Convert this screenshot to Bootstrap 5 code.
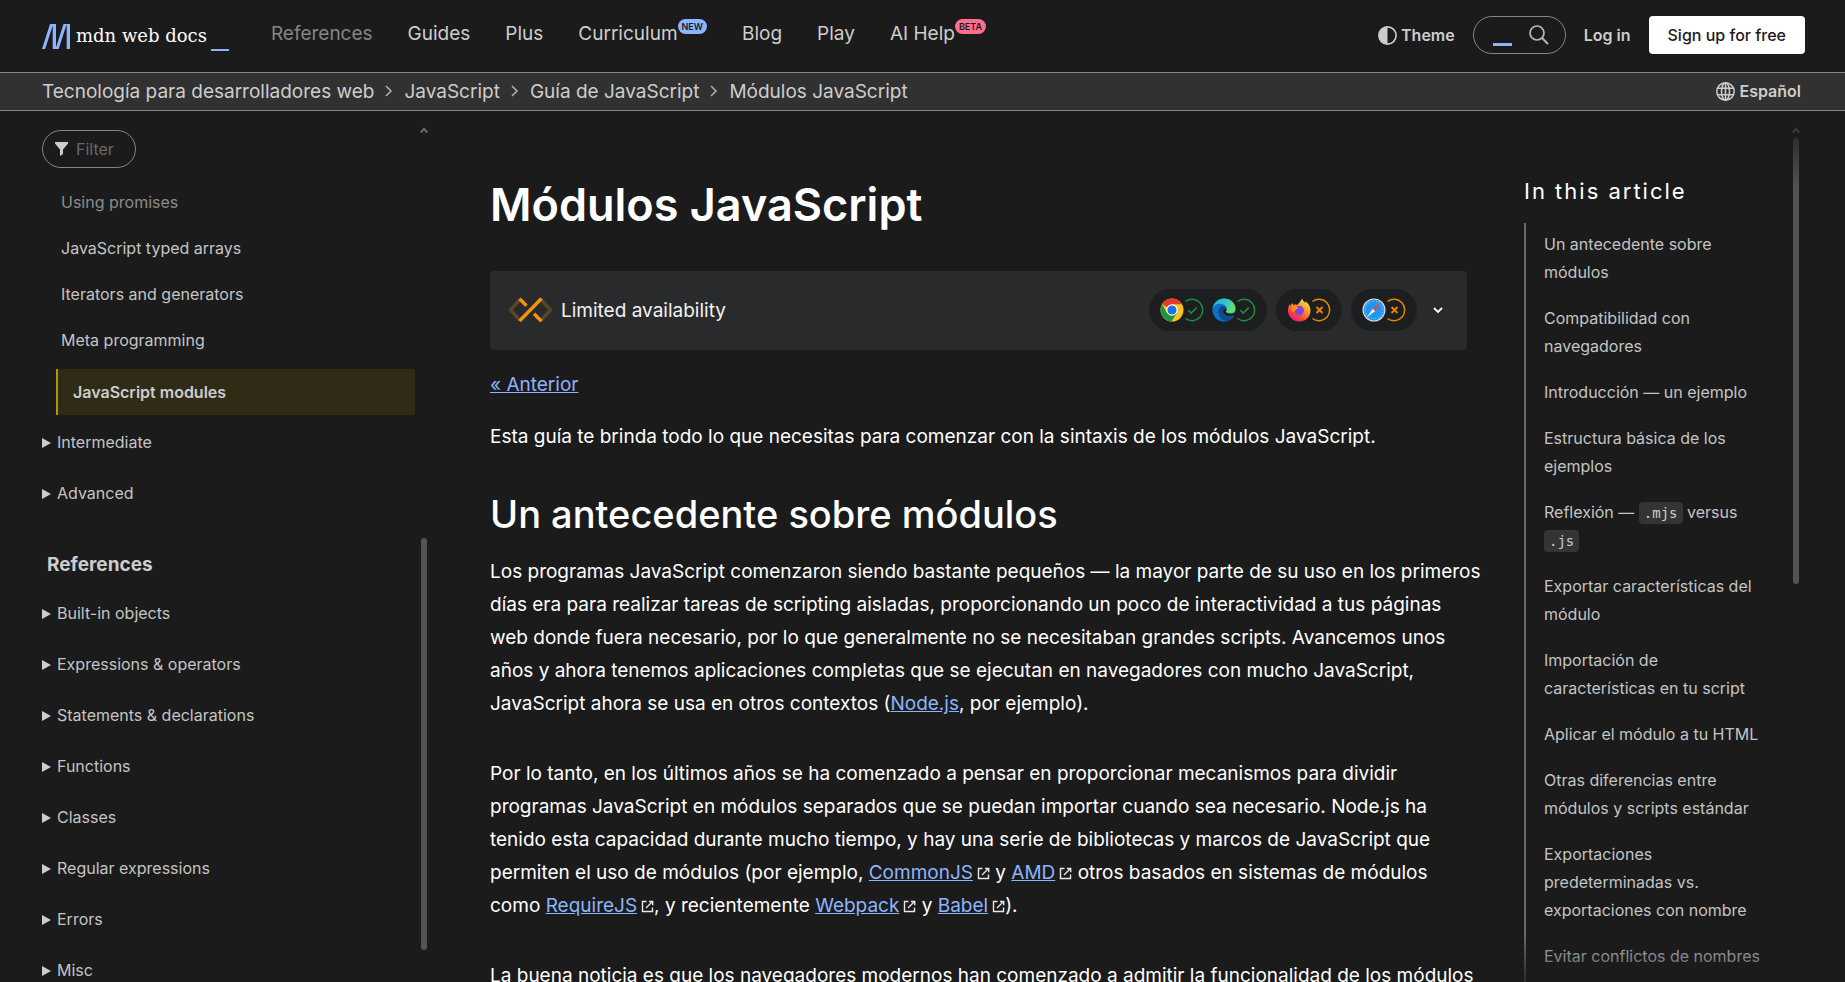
<!DOCTYPE html>
<html lang="es" data-bs-theme="dark">
<head>
<meta charset="utf-8">
<meta name="viewport" content="width=device-width, initial-scale=1">
<title>Módulos JavaScript | MDN</title>
<link href="https://cdn.jsdelivr.net/npm/bootstrap@5.3.0/dist/css/bootstrap.min.css" rel="stylesheet">
<style>
:root{--page:#1b1b1b;--bar:#313131;--line:#858585;--soft:#cdcdcd;--blue:#8cb4ff;--thumb:#535353}
body{background:var(--page);color:#fff;font-family:Inter,"Liberation Sans",sans-serif;font-size:19px;line-height:33px}
a{color:var(--blue)}
svg{flex:none}
.gutter{padding-left:42px;padding-right:40px}
.top-bar{height:73px;border-bottom:1px solid var(--line)}
.logo-text{font-family:"DejaVu Serif",serif;font-size:18px;line-height:30px;color:#fff;margin:0 4px 0 6px}
.logo-cursor{width:18px;height:2px;background:var(--blue)}
.main-menu{gap:35px;margin-left:42px;padding-bottom:5px}
.main-menu .nav-link{color:var(--soft);line-height:24px}
.main-menu .nav-link.visited-page{color:#858585}
.tag{font-size:9px;line-height:15px;height:15px;padding:0 4px;border-radius:8px;font-weight:600;color:#1b1b1b;margin-top:-3px}
.tag-new{background:var(--blue)}
.tag-beta{background:#ff6d8d}
.user-tools{gap:18px;padding-bottom:2px}
.strong-16{font-size:16px;font-weight:600;color:var(--soft);line-height:24px}
.pill{border:1px solid #858585;border-radius:19px;height:38px;background:transparent}
.search-pill{width:93px;padding:0 16px 0 19px}
.search-cursor{width:19px;height:3px;background:var(--blue);margin-top:18px}
.sign-up{background:#fff;color:#1b1b1b;font-size:16px;font-weight:500;height:38px;padding:0 19px;border-radius:4px;line-height:24px}
.sign-up:hover{background:#ddd}
.crumb-bar{background:var(--bar);height:38px;border-bottom:1px solid var(--line);padding-bottom:1px}
.crumb-bar .breadcrumb{gap:11px}
.crumb-bar a.crumb{color:var(--soft);text-decoration:none}
.layout{display:grid;grid-template-columns:391px minmax(0,1fr) 281px;column-gap:57px}
.side{font-size:16px;color:#c4c4c4;line-height:28px}
.side a{color:inherit;text-decoration:none}
.side-nav{padding-top:16px}
.side-body{width:373px;padding-top:3px}
.filter-box{width:94px;padding:0 10px 0 12px}
.filter-box input{background:none;border:0;color:#fff;font-size:16px;width:56px;padding:0;outline:0}
.filter-box input::placeholder{color:#696969;opacity:1}
.sub-list{margin:11px 0 2px 14px;line-height:46px}
.sub-list a{display:block;padding-left:5px}
.sub-list .faded{color:#8c8c8c}
.sub-list .current{margin-top:6px;padding-left:15px;border-left:2px solid #aa9b00;background:#302b17;font-weight:600;color:#cdcdcd}
details summary{line-height:51px;list-style:none;display:flex;align-items:center;gap:6px}
summary::before{content:"";border-left:9px solid #cdcdcd;border-top:5px solid transparent;border-bottom:5px solid transparent}
.side-title{font-size:19px;font-weight:700;color:#cdcdcd;line-height:28px;margin:32px 0 9px 5px}
.scroll-track{width:6px}
.scroll-thumb{background:var(--thumb);border-radius:3px}
.title-1{font-size:45px;line-height:58px;font-weight:600;margin:65px 0 37px}
.title-2{font-size:38px;line-height:48px;font-weight:500;margin:37px 0 17px}
.baseline{background:#292a2c;border-radius:4px;height:79px;padding:0 24px 1px 18px;margin-bottom:18px;color:#f2f2f2}
.engine{background:#1d1e1f;border-radius:21px;height:42px;padding:0 11px}
.engine + .engine{margin-left:9px}
.prose{padding-right:16px;margin-right:-16px}
.prose p{margin:0 -16px 37px 0}
.prose p.tight{margin-bottom:19px}
.ext{margin-left:4px}
.toc-title{font-size:22px;line-height:28px;font-weight:400;letter-spacing:2px;margin:66px 0 18px}
.toc{border-left:2px solid #696969;padding:7px 0 30px 18px;width:240px;line-height:28px}
.toc li{margin-bottom:18px}
.toc code{font-family:"DejaVu Sans Mono",monospace;font-size:14px;line-height:22px;color:#cdcdcd;background:#343434;border-radius:4px;padding:3px 5px}
.toc-scroll{padding-top:16px;margin-right:5px}
.fade-out{height:46px;background:linear-gradient(rgba(27,27,27,0),rgba(27,27,27,.8));pointer-events:none}
</style>
</head>
<body class="vh-100 overflow-hidden d-flex flex-column">
<svg width="0" height="0" class="position-absolute" aria-hidden="true">
  <symbol id="ext" viewBox="0 0 13 13"><path d="M5.500 1.500H1.500v10h10v-4M8 1.500h4.300M11.700.8v4.500M12 1 5 8" fill="none" stroke="#e8e8e8" stroke-width="1.400"/></symbol>
  <symbol id="sep" viewBox="0 0 8 12"><path d="m1 1 5 5-5 5" fill="none" stroke="#b0b0b0" stroke-width="1.500"/></symbol>
  <symbol id="up" viewBox="0 0 8 7"><path d="M.8 5.500 4 1.800l3.200 3.700" fill="none" stroke="currentColor" stroke-width="2"/></symbol>
  <symbol id="yes" viewBox="0 0 20 24"><path d="M1.500 3.500A10.700 10.700 0 1 1 1.500 20.500" fill="none" stroke="#1e8e3e" stroke-width="1.500"/><path d="m4.300 12.200 2.900 2.900 5.600-5.600" fill="none" stroke="#1e8e3e" stroke-width="1.600"/></symbol>
  <symbol id="no" viewBox="0 0 20 24"><path d="M1.500 3.500A10.700 10.700 0 1 1 1.500 20.500" fill="none" stroke="#ea8600" stroke-width="1.500"/><path d="m5.500 9 6 6m0-6-6 6" fill="none" stroke="#ea8600" stroke-width="1.800"/></symbol>
</svg>

<header>
  <nav class="top-bar gutter navbar navbar-expand py-0 flex-nowrap">
    <a href="#" class="d-flex align-items-center text-decoration-none">
      <svg width="28" height="25" viewBox="0 0 28 25" fill="#8cb4ff"><path d="M8 0h3.200L3.200 25H0zM10.700 0H14v25h-3.300zM21.500 0h3.200l-8 25h-3.200zM24.700 0H28v25h-3.300z"/></svg>
      <span class="logo-text">mdn web docs</span>
      <span class="logo-cursor align-self-end"></span>
    </a>
    <ul class="navbar-nav main-menu">
      <li class="nav-item"><a class="nav-link p-0 visited-page" href="#">References</a></li>
      <li class="nav-item"><a class="nav-link p-0" href="#">Guides</a></li>
      <li class="nav-item"><a class="nav-link p-0" href="#">Plus</a></li>
      <li class="nav-item d-flex"><a class="nav-link p-0" href="#">Curriculum</a><span class="tag tag-new">NEW</span></li>
      <li class="nav-item"><a class="nav-link p-0" href="#">Blog</a></li>
      <li class="nav-item"><a class="nav-link p-0" href="#">Play</a></li>
      <li class="nav-item d-flex"><a class="nav-link p-0" href="#">AI Help</a><span class="tag tag-beta">BETA</span></li>
    </ul>
    <div class="user-tools ms-auto d-flex align-items-center">
      <button type="button" class="btn border-0 p-0 d-flex align-items-center gap-1 strong-16">
        <svg width="19" height="19" viewBox="0 0 19 19"><circle cx="9.500" cy="9.500" r="8.600" fill="none" stroke="#cdcdcd" stroke-width="1.600"/><path d="M9.500.5a9 9 0 0 0 0 18z" fill="#cdcdcd"/></svg>
        Theme
      </button>
      <button type="button" class="pill search-pill d-flex align-items-center justify-content-between" aria-label="Search">
        <span class="search-cursor"></span>
        <svg width="20" height="20" viewBox="0 0 20 20" fill="none" stroke="#b8b8b8" stroke-width="1.700"><circle cx="8" cy="8" r="7"/><path d="m13 13 6 6" stroke-width="2"/></svg>
      </button>
      <a href="#" class="strong-16 text-decoration-none">Log in</a>
      <button type="button" class="btn sign-up border-0">Sign up for free</button>
    </div>
  </nav>
  <div class="crumb-bar gutter d-flex align-items-center justify-content-between">
    <nav aria-label="breadcrumb">
      <ol class="breadcrumb m-0 align-items-center">
        <li><a class="crumb" href="#">Tecnología para desarrolladores web</a></li>
        <li class="d-flex"><svg width="8" height="12"><use href="#sep"/></svg></li>
        <li><a class="crumb" href="#">JavaScript</a></li>
        <li class="d-flex"><svg width="8" height="12"><use href="#sep"/></svg></li>
        <li><a class="crumb" href="#">Guía de JavaScript</a></li>
        <li class="d-flex"><svg width="8" height="12"><use href="#sep"/></svg></li>
        <li><a class="crumb" href="#">Módulos JavaScript</a></li>
      </ol>
    </nav>
    <button type="button" class="btn border-0 p-0 me-1 d-flex align-items-center gap-1 strong-16">
      <svg width="19" height="19" viewBox="0 0 19 19" fill="none" stroke="#cdcdcd" stroke-width="1.500"><circle cx="9.500" cy="9.500" r="8.700"/><ellipse cx="9.500" cy="9.500" rx="4" ry="8.700"/><path d="M9.500 1v17M1.700 6.300h15.600M1.700 12.700h15.600"/></svg>
      Español
    </button>
  </div>
</header>

<div class="layout gutter flex-grow-1 overflow-hidden">
  <aside class="side side-nav d-flex overflow-hidden">
    <div class="side-body">
      <label class="pill filter-box d-flex align-items-center gap-2">
        <svg width="13" height="14" viewBox="0 0 13 14" fill="#cdcdcd"><path d="M0 0h13v1.500L8 7.500V12l-3 2V7.500L0 1.500z"/></svg>
        <input type="text" placeholder="Filter" aria-label="Filter">
      </label>
      <div class="sub-list">
        <a class="faded" href="#">Using promises</a>
        <a href="#">JavaScript typed arrays</a>
        <a href="#">Iterators and generators</a>
        <a href="#">Meta programming</a>
        <a class="current" href="#" aria-current="page">JavaScript modules</a>
      </div>
      <details><summary>Intermediate</summary></details>
      <details><summary>Advanced</summary></details>
      <h2 class="side-title">References</h2>
      <details><summary>Built-in objects</summary></details>
      <details><summary>Expressions &amp; operators</summary></details>
      <details><summary>Statements &amp; declarations</summary></details>
      <details><summary>Functions</summary></details>
      <details><summary>Classes</summary></details>
      <details><summary>Regular expressions</summary></details>
      <details><summary>Errors</summary></details>
      <details><summary>Misc</summary></details>
    </div>
    <div class="scroll-track d-flex flex-column align-items-center ms-1 ps-1" style="color:#696969">
      <svg width="8" height="7"><use href="#up"/></svg>
      <div class="scroll-thumb scroll-track" style="height:412px;margin-top:404px"></div>
    </div>
  </aside>

  <main class="prose overflow-hidden">
    <h1 class="title-1">Módulos JavaScript</h1>
    <div class="baseline d-flex align-items-center">
      <svg width="45" height="26" viewBox="0 0 45 26" fill="none" stroke-width="3.400"><path d="M12 2.500 2.500 13 12 23.500M33 2.500 42.500 13 33 23.500" stroke="#5b4527"/><path d="m11.500 24 22-22.500M11.500 1.800l7 7M26 16.700l7.500 7.500" stroke="#f09409"/></svg>
      <span class="ms-2">Limited availability</span>
      <div class="ms-auto d-flex align-items-center">
        <div class="engine d-flex align-items-center">
          <svg width="24" height="24" viewBox="0 0 24 24"><circle cx="12" cy="12" r="11.500" fill="#fcc31e"/><path d="M12 12 2 6.200A11.500 11.500 0 0 1 22 6.200H12z" fill="#e33b2e"/><path d="M2 6.200A11.500 11.500 0 0 0 11.400 23.500L17 15 12 12 7 15z" fill="#229342"/><circle cx="12" cy="12" r="5.800" fill="#fff"/><circle cx="12" cy="12" r="4.600" fill="#1a73e8"/></svg>
          <svg width="20" height="24"><use href="#yes"/></svg>
          <svg class="ms-2" width="24" height="24" viewBox="0 0 24 24"><defs><linearGradient id="ed" x1="0" x2="1" y1="0" y2=".4"><stop offset="0" stop-color="#2a9fe0"/><stop offset=".5" stop-color="#2fc0d5"/><stop offset="1" stop-color="#62e06b"/></linearGradient></defs><circle cx="12" cy="12" r="11.500" fill="#0c70cc"/><path d="M.6 11C1.500 4.500 6.500.5 12 .5 19 .5 23.500 5.500 23.500 10.500c0 3-2.500 5-5.300 5-2.700 0-4.500-.9-4.500-1.900 0-.7 1-1 1-2.600C14.700 8 11.500 5.800 8 5.800 4.700 5.800 2 7.600.6 11z" fill="url(#ed)"/><path d="M14.700 11c0-1.500-1.500-3-3.500-3C7.500 8 5 12 7 17c1.500 4 5 6.400 8.500 6 3-.6 5.500-2.500 6.700-4.700-6 2.500-11.500-.5-11.200-5.300.1-1.500 1-3 3-3z" fill="#114a8b"/><path d="M18.200 15.500c-2.700 0-4.500-.9-4.500-1.900 0-.7 1-1 1-2.600-3-1-4 1-3.600 3C12 18 17 20 22.500 17.500l1-3.500c-1.200 1-3 1.500-5.300 1.500z" fill="#1d1e1f"/></svg>
          <svg width="20" height="24"><use href="#yes"/></svg>
        </div>
        <div class="engine d-flex align-items-center">
          <svg width="24" height="24" viewBox="0 0 24 24"><defs><linearGradient id="ff" x1=".9" y1="0" x2=".2" y2="1"><stop offset="0" stop-color="#fff44f"/><stop offset=".4" stop-color="#ff9a2a"/><stop offset=".75" stop-color="#ff3d45"/><stop offset="1" stop-color="#e5158b"/></linearGradient></defs><path d="M15.200.5c.2 2 2 3 3.500 4.500 0-.6 0-1-.2-1.700 3 2.200 5 5.500 5 9.200C23.500 19 18.500 23.500 12.300 23.500S1 18.600 1 12.500c0-2.800.8-5.200 2-6.600v2C3.700 6.800 5 5.600 5.700 4.900l.4 2c1.400-.5 2.700-.4 4 0C11.500 6 13 4 15.200.5z" fill="url(#ff)"/><circle cx="12.300" cy="12.500" r="4.700" fill="#7a45e0"/><path d="M3.500 9c3-2 6-1 8.500 1-1 .5-3 .5-3 2 0 .8-1.400 0-1.400 1.500L5 14z" fill="#ff8a16"/></svg>
          <svg width="20" height="24"><use href="#no"/></svg>
        </div>
        <div class="engine d-flex align-items-center">
          <svg width="24" height="24" viewBox="0 0 24 24"><circle cx="12" cy="12" r="11.500" fill="#d9dde0"/><circle cx="12" cy="12" r="10.400" fill="#1e96f0"/><circle cx="12" cy="12" r="8.800" fill="none" stroke="#8fd0fb" stroke-width="1.600" stroke-dasharray=".6 1.700"/><path d="M19.500 4.500 10.800 10.800l2.400 2.400z" fill="#e8473f"/><path d="m4.500 19.500 8.700-6.300-2.400-2.400z" fill="#f4f4f4"/></svg>
          <svg width="20" height="24"><use href="#no"/></svg>
        </div>
        <svg class="ms-3" width="10" height="7" viewBox="0 0 10 7"><path d="m1 1 4 4 4-4" fill="none" stroke="#fff" stroke-width="1.800"/></svg>
      </div>
    </div>
    <p class="tight"><a href="#">« Anterior</a></p>
    <p>Esta guía te brinda todo lo que necesitas para comenzar con la sintaxis de los módulos JavaScript.</p>
    <h2 class="title-2">Un antecedente sobre módulos</h2>
    <p>Los programas JavaScript comenzaron siendo bastante pequeños — la mayor parte de su uso en los primeros días era para realizar tareas de scripting aisladas, proporcionando un poco de interactividad a tus páginas web donde fuera necesario, por lo que generalmente no se necesitaban grandes scripts. Avancemos unos años y ahora tenemos aplicaciones completas que se ejecutan en navegadores con mucho JavaScript, JavaScript ahora se usa en otros contextos (<a href="#">Node.js</a>, por ejemplo).</p>
    <p>Por lo tanto, en los últimos años se ha comenzado a pensar en proporcionar mecanismos para dividir programas JavaScript en módulos separados que se puedan importar cuando sea necesario. Node.js ha tenido esta capacidad durante mucho tiempo, y hay una serie de bibliotecas y marcos de JavaScript que permiten el uso de módulos (por ejemplo, <a href="#">CommonJS</a><svg class="ext" width="13" height="13"><use href="#ext"/></svg> y <a href="#">AMD</a><svg class="ext" width="13" height="13"><use href="#ext"/></svg> otros basados en sistemas de módulos como <a href="#">RequireJS</a><svg class="ext" width="13" height="13"><use href="#ext"/></svg>, y recientemente <a href="#">Webpack</a><svg class="ext" width="13" height="13"><use href="#ext"/></svg> y <a href="#">Babel</a><svg class="ext" width="13" height="13"><use href="#ext"/></svg>).</p>
    <p>La buena noticia es que los navegadores modernos han comenzado a admitir la funcionalidad de los módulos</p>
  </main>

  <aside class="side d-flex justify-content-between overflow-hidden position-relative">
    <div>
      <h2 class="toc-title text-white">In this article</h2>
      <ul class="toc list-unstyled">
        <li><a href="#">Un antecedente sobre módulos</a></li>
        <li><a href="#">Compatibilidad con navegadores</a></li>
        <li><a href="#">Introducción — un ejemplo</a></li>
        <li><a href="#">Estructura básica de los ejemplos</a></li>
        <li><a href="#">Reflexión — <code>.mjs</code> versus <code>.js</code></a></li>
        <li><a href="#">Exportar características del módulo</a></li>
        <li><a href="#">Importación de características en tu script</a></li>
        <li><a href="#">Aplicar el módulo a tu HTML</a></li>
        <li><a href="#">Otras diferencias entre módulos y scripts estándar</a></li>
        <li><a href="#">Exportaciones predeterminadas vs. exportaciones con nombre</a></li>
        <li><a href="#">Evitar conflictos de nombres</a></li>
      </ul>
    </div>
    <div class="toc-scroll d-flex flex-column align-items-center" style="color:#3c3c3c">
      <svg width="8" height="7"><use href="#up"/></svg>
      <div class="scroll-thumb scroll-track mt-1" style="height:446px;background:linear-gradient(#2e2e2e,#535353 50px)"></div>
    </div>
    <div class="fade-out position-absolute bottom-0 start-0 end-0"></div>
  </aside>
</div>
<script src="https://cdn.jsdelivr.net/npm/bootstrap@5.3.0/dist/js/bootstrap.bundle.min.js"></script>
</body>
</html>
